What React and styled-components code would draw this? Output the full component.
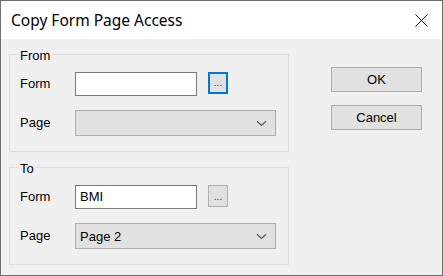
import React from 'react';
import styled, { createGlobalStyle } from 'styled-components';

const GlobalStyle = createGlobalStyle`
  html, body {
    margin: 0;
    padding: 0;
    background: #f0f0f0;
  }
  * {
    box-sizing: border-box;
  }
`;

const Window = styled.div`
  width: 443px;
  height: 276px;
  display: flex;
  flex-direction: column;
  border: 1px solid #6f6f6f;
  background: #f0f0f0;
  font-family: 'Liberation Sans', Arial, sans-serif;
  font-size: 13px;
  color: #000;
`;

const TitleBar = styled.div`
  height: 38px;
  flex-shrink: 0;
  display: flex;
  align-items: center;
  justify-content: space-between;
  padding: 0 14px 0 10px;
  background: #fff;
`;

const Title = styled.span`
  font-family: 'Noto Sans', 'Open Sans', sans-serif;
  font-size: 15.5px;
  color: #000;
`;

const Close = styled.div`
  width: 14px;
  height: 14px;
  display: flex;
  align-items: center;
  justify-content: center;
`;

const Body = styled.div`
  flex: 1;
  display: flex;
  padding: 6px 0 0 8px;
`;

const Column = styled.div`
  display: flex;
  flex-direction: column;
`;

const Group = styled.fieldset`
  width: 280px;
  margin: ${p => (p.$first ? '0' : '6px')} 0 0 0;
  padding: 8px 0 15px 10px;
  border: 1px solid #dcdcdc;
  min-width: 0;
  display: flex;
  flex-direction: column;
  gap: 14px;
`;

const Legend = styled.legend`
  margin-left: -2px;
  padding: 3px 2px 0;
  line-height: 16px;
`;

const Row = styled.div`
  display: flex;
  align-items: flex-start;
`;

const Label = styled.span`
  width: 55px;
  line-height: ${p => p.$h}px;
`;

const TextBox = styled.div`
  width: 122px;
  height: 24px;
  padding-left: 4px;
  line-height: 22px;
  background: #fff;
  border: 1px solid #7a7a7a;
`;

const Ellipsis = styled.div`
  width: 20px;
  height: 22px;
  margin-left: 11px;
  display: flex;
  align-items: flex-end;
  justify-content: center;
  padding-bottom: 5px;
  background: #e1e1e1;
  border: ${p => (p.$focused ? '2px solid #0078d7' : '1px solid #adadad')};
  font-size: 10px;
  line-height: 8px;
  color: #333;
`;

const Combo = styled.div`
  width: 201px;
  height: 26px;
  display: flex;
  align-items: center;
  justify-content: space-between;
  padding: 0 8px 0 4px;
  background: #e1e1e1;
  border: 1px solid #adadad;
`;

const Buttons = styled.div`
  margin-left: 42px;
  padding-top: 22px;
  display: flex;
  flex-direction: column;
  gap: 13px;
`;

const Button = styled.div`
  width: 91px;
  height: 25px;
  display: flex;
  align-items: center;
  justify-content: center;
  background: #e1e1e1;
  border: 1px solid #adadad;
`;

const Chevron = () => (
  <svg width="11" height="7" viewBox="0 0 11 7">
    <path d="M1 1.2 L5.5 5.5 L10 1.2" fill="none" stroke="#5a5a5a" strokeWidth="1.2" />
  </svg>
);

const FormGroup = ({ title, first, form, page, focused }) => (
  <Group $first={first}>
    <Legend>{title}</Legend>
    <Row>
      <Label $h={24}>Form</Label>
      <TextBox>{form}</TextBox>
      <Ellipsis $focused={focused}>...</Ellipsis>
    </Row>
    <Row>
      <Label $h={26}>Page</Label>
      <Combo>
        <span>{page}</span>
        <Chevron />
      </Combo>
    </Row>
  </Group>
);

const App = () => (
  <>
    <GlobalStyle />
    <Window>
      <TitleBar>
        <Title>Copy Form Page Access</Title>
        <Close>
          <svg width="13" height="13" viewBox="0 0 13 13">
            <path d="M0.5 0.5 L12.5 12.5 M12.5 0.5 L0.5 12.5" stroke="#111" strokeWidth="1" />
          </svg>
        </Close>
      </TitleBar>
      <Body>
        <Column>
          <FormGroup title="From" first form="" page="" focused />
          <FormGroup title="To" form="BMI" page="Page 2" />
        </Column>
        <Buttons>
          <Button>OK</Button>
          <Button>Cancel</Button>
        </Buttons>
      </Body>
    </Window>
  </>
);

export default App;
